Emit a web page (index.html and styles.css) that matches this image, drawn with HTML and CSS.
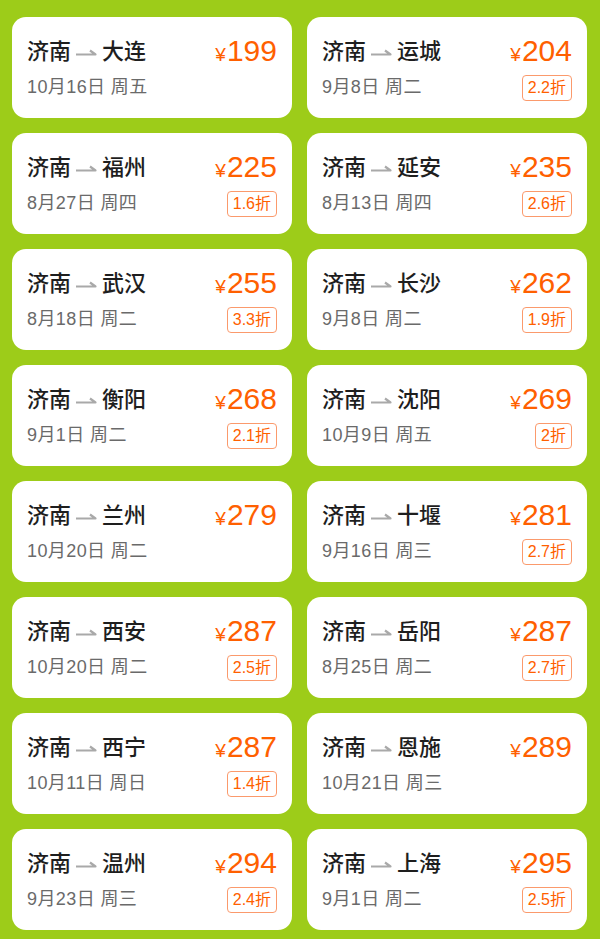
FILE: index.html
```html
<!DOCTYPE html>
<html lang="zh-CN">
<head>
    <meta charset="UTF-8">
    <meta name="viewport" content="width=device-width, initial-scale=1.0">
    <title>特价机票</title>
    <link rel="stylesheet" href="styles.css">
</head>
<body>

<div class="list" id="list"></div>

<script>
    // to, price, date, discount
    const flights = [
        ['大连', 199, '10月16日 周五', ''],
        ['运城', 204, '9月8日 周二', '2.2折'],
        ['福州', 225, '8月27日 周四', '1.6折'],
        ['延安', 235, '8月13日 周四', '2.6折'],
        ['武汉', 255, '8月18日 周二', '3.3折'],
        ['长沙', 262, '9月8日 周二', '1.9折'],
        ['衡阳', 268, '9月1日 周二', '2.1折'],
        ['沈阳', 269, '10月9日 周五', '2折'],
        ['兰州', 279, '10月20日 周二', ''],
        ['十堰', 281, '9月16日 周三', '2.7折'],
        ['西安', 287, '10月20日 周二', '2.5折'],
        ['岳阳', 287, '8月25日 周二', '2.7折'],
        ['西宁', 287, '10月11日 周日', '1.4折'],
        ['恩施', 289, '10月21日 周三', ''],
        ['温州', 294, '9月23日 周三', '2.4折'],
        ['上海', 295, '9月1日 周二', '2.5折']
    ];

    const arrow = '<svg class="arrow" width="22" height="14" viewBox="0 0 22 14">' +
        '<path d="M1 9.5 H20.5 L15 5.5" fill="none" stroke="#a9a9a9" stroke-width="2.2" stroke-linejoin="round"/></svg>';

    let html = '';
    flights.forEach(f => {
        html += `
            <div class="card">
                <div class="info">
                    <div class="route">济南${arrow}${f[0]}</div>
                    <div class="date">${f[2]}</div>
                </div>
                <div class="deal">
                    <div class="price"><span class="yen">¥</span>${f[1]}</div>
                    ${f[3] ? `<span class="badge">${f[3]}</span>` : ''}
                </div>
            </div>
        `;
    });
    document.getElementById('list').innerHTML = html;
</script>

</body>
</html>
```

FILE: styles.css
```css
/* Reset */
body, div {
    margin: 0;
    padding: 0;
}

body {
    font-family: "Liberation Sans", "Noto Sans CJK SC", sans-serif;
    background-color: #9dcc19;
    width: 600px;
    height: 939px;
    overflow: hidden;
}

/* Two column list of cards */
.list {
    display: grid;
    grid-template-columns: 280px 280px;
    grid-auto-rows: 101px;
    column-gap: 15px;
    row-gap: 15px;
    padding: 17px 13px 10px 12px;
}

.card {
    background-color: #fff;
    border-radius: 14px;
    padding: 0 15px;
    display: flex;
    justify-content: space-between;
}

.route {
    margin-top: 20px;
    font-size: 22px;
    font-weight: 500;
    line-height: 30px;
    color: #1e1e1e;
    display: flex;
    align-items: center;
}

.arrow {
    margin: 0 5px 0 4px;
}

.date {
    margin-top: 8px;
    font-size: 18px;
    line-height: 24px;
    letter-spacing: 0.4px;
    color: #6a6a6a;
}

.deal {
    display: flex;
    flex-direction: column;
    align-items: flex-end;
}

.price {
    margin-top: 19px;
    font-size: 30px;
    line-height: 30px;
    color: #ff6000;
}

.yen {
    font-size: 19px;
    margin-right: 1px;
}

.badge {
    margin-top: 5px;
    border: 1px solid #fb9a6c;
    border-radius: 4px;
    padding: 0 5px;
    font-size: 16px;
    line-height: 24px;
    color: #ff6000;
}
```
